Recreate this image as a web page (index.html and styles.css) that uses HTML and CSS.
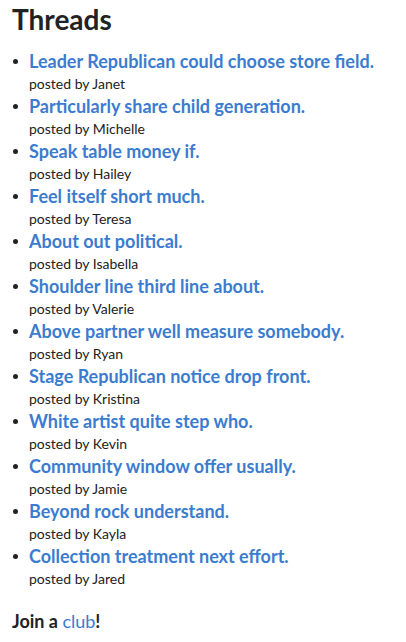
FILE: index.html
```html
<!DOCTYPE html>
<html>
<head>
<meta charset="utf-8">
<link rel="stylesheet" href="styles.css">
</head>
<body>
<h1 class="title">Threads</h1>
<ul class="threads">
  <li><a class="thread-link" href="#">Leader Republican could choose store field.</a><div class="meta">posted by Janet</div></li>
  <li><a class="thread-link" href="#">Particularly share child generation.</a><div class="meta">posted by Michelle</div></li>
  <li><a class="thread-link" href="#">Speak table money if.</a><div class="meta">posted by Hailey</div></li>
  <li><a class="thread-link" href="#">Feel itself short much.</a><div class="meta">posted by Teresa</div></li>
  <li><a class="thread-link" href="#">About out political.</a><div class="meta">posted by Isabella</div></li>
  <li><a class="thread-link" href="#">Shoulder line third line about.</a><div class="meta">posted by Valerie</div></li>
  <li><a class="thread-link" href="#">Above partner well measure somebody.</a><div class="meta">posted by Ryan</div></li>
  <li><a class="thread-link" href="#">Stage Republican notice drop front.</a><div class="meta">posted by Kristina</div></li>
  <li><a class="thread-link" href="#">White artist quite step who.</a><div class="meta">posted by Kevin</div></li>
  <li><a class="thread-link" href="#">Community window offer usually.</a><div class="meta">posted by Jamie</div></li>
  <li><a class="thread-link" href="#">Beyond rock understand.</a><div class="meta">posted by Kayla</div></li>
  <li><a class="thread-link" href="#">Collection treatment next effort.</a><div class="meta">posted by Jared</div></li>
</ul>
<p class="join">Join a <a class="club" href="#">club</a>!</p>
</body>
</html>
```
FILE: styles.css
```css
body {
  margin: 0;
  padding: 0 12px;
  font-family: Lato, "Liberation Sans", sans-serif;
  color: #222;
  background: #fff;
}
.title {
  font-size: 28px;
  font-weight: 700;
  margin: 0;
  padding-top: 2px;
  line-height: 34px;
}
.threads {
  margin: 13px 0 0 0;
  padding-left: 17px;
  list-style: none;
}
.threads li {
  position: relative;
  margin: 0;
  line-height: 1;
}
.threads li::before {
  content: "";
  position: absolute;
  left: -16px;
  top: 10px;
  width: 5px;
  height: 5px;
  border-radius: 50%;
  background: #222;
}
.thread-link {
  display: block;
  font-size: 18px;
  font-weight: 700;
  color: #3b7ccf;
  text-decoration: none;
  line-height: 25px;
}
.meta {
  font-size: 14px;
  line-height: 20px;
}
.join {
  margin: 21px 0 0 0;
  font-size: 18px;
  font-weight: 700;
}
.club {
  color: #3b7ccf;
  text-decoration: none;
  font-weight: 400;
}
```
